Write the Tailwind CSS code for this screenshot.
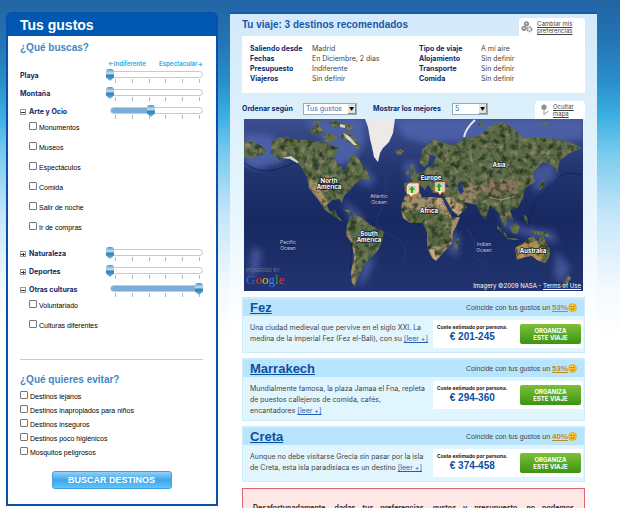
<!DOCTYPE html>
<html lang="es">
<head>
    <meta charset="UTF-8">
    <meta name="viewport" content="width=device-width, initial-scale=1.0">
    <title>Tus gustos</title>
    <script src="https://cdn.jsdelivr.net/npm/@tailwindcss/browser@4"></script>
</head>
<body class="h-screen overflow-hidden bg-white bg-[linear-gradient(#2264a4_0px,#2374b4_40px,#2a8dcb_80px,#3aaee2_115px,#7ccbee_155px,#c4e6f8_215px,#f5faff_290px,#ffffff_340px)] font-['Inter','Liberation_Sans',sans-serif] text-[7px] leading-[10px] text-[#444]">

    <div class="flex items-start gap-3 pl-1.5 pr-[23px] pt-3">

        <!-- Panel de gustos -->
        <aside class="w-[212px] shrink-0 rounded-t-md border-2 border-[#0a50a8] bg-white">
            <h1 class="h-[22px] bg-[#0058b0] pl-3 font-['Liberation_Sans'] text-[14px] leading-[22px] font-bold text-white">Tus gustos</h1>

            <form class="pl-3 pr-[13px] font-['Liberation_Sans'] text-black">
                <h2 class="mt-1 text-[10px] leading-[16px] font-bold text-[#3f87c4]">¿Qué buscas?</h2>
                <div class="mt-[3px] flex h-2 justify-between pl-[88px] font-['Inter'] text-[6px] leading-[10px] font-bold text-[#3fb0e4]">
                    <span>←Indiferente</span>
                    <span>Espectacular→</span>
                </div>

                <div id="sliders"></div>

                <hr class="mt-[23px] border-[#a5dcea]">

                <h2 class="mt-[13px] text-[10px] leading-[14px] font-bold text-[#3f87c4]">¿Qué quieres evitar?</h2>
                <div class="mt-[3px]">
                    <label class="flex h-[14px] items-baseline gap-0.5 leading-[14px]"><input type="checkbox" class="size-2 appearance-none rounded-[1px] border border-[#777] bg-white checked:bg-[#0058b0]">Destinos lejanos</label>
                    <label class="flex h-[14px] items-baseline gap-0.5 leading-[14px]"><input type="checkbox" class="size-2 appearance-none rounded-[1px] border border-[#777] bg-white checked:bg-[#0058b0]">Destinos inapropiados para niños</label>
                    <label class="flex h-[14px] items-baseline gap-0.5 leading-[14px]"><input type="checkbox" class="size-2 appearance-none rounded-[1px] border border-[#777] bg-white checked:bg-[#0058b0]">Destinos inseguros</label>
                    <label class="flex h-[14px] items-baseline gap-0.5 leading-[14px]"><input type="checkbox" class="size-2 appearance-none rounded-[1px] border border-[#777] bg-white checked:bg-[#0058b0]">Destinos poco higiénicos</label>
                    <label class="flex h-[14px] items-baseline gap-0.5 leading-[14px]"><input type="checkbox" class="size-2 appearance-none rounded-[1px] border border-[#777] bg-white checked:bg-[#0058b0]">Mosquitos peligrosos</label>
                </div>

                <button type="button" class="mx-auto mt-[11px] mb-[15px] block h-[18px] w-[120px] rounded-[3px] border border-[#3c9fe0] bg-linear-to-b from-[#8fd0f8] via-[#3ea6ea] to-[#62c4f6] text-[9px] leading-[16px] font-bold text-white">BUSCAR DESTINOS</button>
            </form>
        </aside>

        <!-- Resultados -->
        <main class="min-w-0 flex-1 border-t-2 border-[#0d5cb4] bg-[linear-gradient(#d4eafa_0px,#dcf0fb_100px,#e8f6fd_200px,#ffffff_310px)] px-3">
            <div class="flex h-[22px] items-end justify-between">
                <h2 class="mb-1 font-['Liberation_Sans'] text-[10px] leading-[14px] font-bold text-[#1b57a8]">Tu viaje: 3 destinos recomendados</h2>
                <a href="#" class="flex h-[18px] w-[66px] items-center gap-1 rounded-t-[4px] bg-white pl-0.5 text-[6px] leading-[7px] text-[#444] underline">
                    <svg class="size-3 shrink-0" viewBox="0 0 12 12" fill="none" stroke="#8e8e8e" stroke-width="1.8">
                        <circle cx="5.5" cy="2.8" r="1.7"/>
                        <circle cx="3" cy="7.3" r="1.7"/>
                        <circle cx="8.5" cy="8.2" r="2.1" stroke-dasharray="1.5 .6"/>
                    </svg>
                    <span>Cambiar mis<br>preferencias</span>
                </a>
            </div>

            <dl class="grid grid-cols-[62px_1fr_62px_96px] bg-white px-2 pt-2 pb-[9px] [&>dt]:font-bold [&>dt]:text-[#0d2a6b]">
                <dt>Saliendo desde</dt><dd>Madrid</dd><dt>Tipo de viaje</dt><dd>A mi aire</dd>
                <dt>Fechas</dt><dd>En Diciembre, 2 días</dd><dt>Alojamiento</dt><dd>Sin definir</dd>
                <dt>Presupuesto</dt><dd>Indiferente</dd><dt>Transporte</dt><dd>Sin definir</dd>
                <dt>Viajeros</dt><dd>Sin definir</dd><dt>Comida</dt><dd>Sin definir</dd>
            </dl>

            <div class="mt-1.5 flex h-5 items-center font-bold text-[#0d2a6b]">
                <label for="orden" class="w-[61px]">Ordenar según</label>
                <div class="relative w-[54px]">
                    <select id="orden" class="block h-3 w-full appearance-none border border-[#9ab] bg-white pl-0.5 text-[7px] leading-[10px] font-normal text-[#2a70b8]">
                        <option>Tus gustos</option>
                        <option>Precio</option>
                    </select>
                    <span class="pointer-events-none absolute inset-y-px right-px flex w-2 items-center justify-center border-r border-b border-[#888] bg-[#e6e3da] text-[5px] font-normal text-black">▼</span>
                </div>
                <label for="mejores" class="ml-4 w-[79px]">Mostrar los mejores</label>
                <div class="relative w-[36px]">
                    <select id="mejores" class="block h-3 w-full appearance-none border border-[#9ab] bg-white pl-0.5 text-[7px] leading-[10px] font-normal text-[#2a70b8]">
                        <option>5</option>
                        <option>10</option>
                    </select>
                    <span class="pointer-events-none absolute inset-y-px right-px flex w-2 items-center justify-center border-r border-b border-[#888] bg-[#e6e3da] text-[5px] font-normal text-black">▼</span>
                </div>
                <a href="#" class="ml-auto flex h-[18px] w-[50px] items-center gap-1 self-end rounded-t-[4px] bg-white pl-1 text-[6px] leading-[7px] font-normal text-[#444] underline">
                    <svg class="h-3 w-2.5 shrink-0" viewBox="0 0 10 12">
                        <circle cx="5" cy="3.2" r="2.6" fill="#8f8f8f"/>
                        <path d="M5 5v6M5.500 10l4-3" stroke="#999" stroke-width="1"/>
                    </svg>
                    <span>Ocultar<br>mapa</span>
                </a>
            </div>

            <!-- Mapa -->
            <div class="relative mx-0.5 h-[172px] overflow-hidden bg-[#1c2e6b]">
                <svg class="size-full" viewBox="0 0 339 172" preserveAspectRatio="xMidYMid slice">
                    <defs>
                        <linearGradient id="mar" x1="0" y1="0" x2="0" y2="1">
                            <stop offset="0" stop-color="#3c4e90"/>
                            <stop offset=".3" stop-color="#22356f"/>
                            <stop offset=".6" stop-color="#182860"/>
                            <stop offset="1" stop-color="#22346f"/>
                        </linearGradient>
                        <filter id="relieve" x="0" y="0" width="100%" height="100%" color-interpolation-filters="sRGB">
                            <feTurbulence type="fractalNoise" baseFrequency=".16" numOctaves="3" seed="4" result="n"/>
                            <feColorMatrix in="n" type="matrix" values="0 0 0 0 .16  0 0 0 0 .22  0 0 0 0 .14  3 0 0 0 -1.35" result="s"/>
                            <feComposite in="s" in2="SourceAlpha" operator="in" result="t"/>
                            <feColorMatrix in="n" type="matrix" values="0 0 0 0 .58  0 0 0 0 .52  0 0 0 0 .4  0 3 0 0 -1.5" result="c"/>
                            <feComposite in="c" in2="SourceAlpha" operator="in" result="d"/>
                            <feMerge><feMergeNode in="SourceGraphic"/><feMergeNode in="d"/><feMergeNode in="t"/></feMerge>
                        </filter>
                        <filter id="suave"><feGaussianBlur stdDeviation="3"/></filter>
                    </defs>
                    <rect width="339" height="172" fill="url(#mar)"/>

                    <!-- aguas poco profundas -->
                    <g filter="url(#suave)" fill="#4c5ea6">
                        <path d="M0 14L28 16L40 42L14 50L0 46ZM60 0H120V24L110 42L90 48L80 20ZM150 0H339V20L300 24L220 22L180 24L160 18Z"/>
                        <path d="M98 80l18 14 6 6-16 2zM120 46l12 14-6 8-12-4zM118 140l14-2-8 20-10 12zM255 94l24 14 30 4 6 12-24-4-30-10zM286 50l24-8 2 16-22 16zM158 44l14-2 2 20-10 0zM205 110l12 8-4 20-8-4zM8 128l10 4-4 22-10 6zM312 132l14 16-6 16-10-6z" opacity=".75"/>
                    </g>
                    <g fill="none" stroke="#101d4e" stroke-width="1" opacity=".7">
                        <path d="M0 44Q16 56 34 50T56 42M338 56Q318 50 312 62L292 82 286 96 284 106M108 120L106 150"/>
                        <path d="M140 54Q146 76 136 92T150 118 148 160M222 108Q234 124 230 138L248 152" stroke="#2c3d7c"/>
                    </g>

                    <g filter="url(#relieve)">
                        <g fill="#5c6d48">
                            <path d="M28 23L36 18 44 18 54 21 63 21 78 23 86 26 95 29 90 38 92 43 97 47 100 52 103 47 106 41 107 34 113 38 119 46 124 54 126 61 118 60 114 63 110 66 106 71 100 77 98 84 95 80 88 81 83 86 86 93 91 91 93 96 99 103 91 98 81 91 73 79 65 69 63 58 56 46 46 39 38 39 31 46 35 40 27 34Z"/>
                            <path d="M106 98L111 96 119 99 126 106 133 109 140 113 138 123 133 133 124 141 119 149 114 158 111 168 108 164 107 154 110 138 108 124 102 116 103 106Z"/>
                            <path d="M176 44L178 31 188 21 199 23 206 26 214 24 221 19 232 17 239 14 245 7 259 3 269 9 275 15 281 19 306 19 326 23 338 29 326 34 316 41 313 54 308 46 299 43 289 54 291 63 281 69 279 79 274 88 266 91 269 101 263 99 262 108 259 106 255 94 246 86 241 101 236 94 233 86 219 83 223 88 214 97 208 91 201 79 196 73 189 74 184 66 181 71 173 63 171 71 161 73 160 64 168 63 166 58 172 55 178 53 184 48 189 46 192 37 186 36 184 46 180 48Z"/>
                            <path d="M0 23L11 23 23 31 18 36 11 38 0 39Z"/>
                            <path d="M66 10l8-4 6 5-4 5-8-1zM79 16l9-2 6 6-8 4-7-3zM84 4l7-3 6 4-5 4zM97 14l7-1 8 7 6 9-5 1-6-6-9-4zM96 4l9 1 6 4-8 2zM68 3l8-2 2 3-8 2z"/>
                            <path d="M151 32l5-2 4 2-4 4-4-1zM166 46l3-1 2 6 2 5-6 2 1-5zM162 52l3-1 0 4-3 1zM285 111l7 1 9 1 8 6-8-2-9-1zM266 108l6-4 4 4-3 7-5-1zM253 106l9 9 1 4-10-10zM280 96l3 2 1 7-3-3zM294 68l4-4 2-6 1 6-5 7zM211 122l4-3-2 12-3-2zM263 119l12 1 0 1-12-1zM324 156l3 3-6 9-4 0zM99 90l9 2 3 3-6-1zM234 5l4-2 2 4-4 1zM296 5l6-2 3 3-6 1z"/>
                        </g>
                        <path fill="#a3926b" d="M158 84L161 77 166 74 176 74 178 78 186 78 198 79 203 89 208 98 216 98 212 108 209 113 208 124 199 134 192 142 188 139 183 128 183 113 179 104 166 104 159 99 157 91Z"/>
                        <path fill="#56693e" d="M159 94L172 91 190 93 204 96 208 103 207 114 205 123 196 128 184 126 183 113 179 104 166 104Z"/>
                        <path fill="#d0ab80" d="M201 79L208 78 214 84 223 88 214 97 208 91ZM185 128L190 127 195 136 192 141 189 139ZM193 79L198 79 201 88 193 88Z"/>
                        <path fill="#9a8966" d="M214 78L222 68 236 67 234 76 228 84 219 83Z"/>
                        <path fill="#86755a" d="M236 66L246 62 256 60 276 62 277 68 262 74 248 78 238 73Z"/>
                        <path fill="#bb914e" d="M271 129L281 123 285 119 289 118 294 123 298 116 302 124 306 131 305 138 301 144 293 141 288 137 281 138 273 141Z"/>
                        <path fill="#667344" d="M294 123L298 116 302 124 306 131 305 138 301 144 296 142 301 134ZM283 121L289 118 293 122 287 123Z"/>
                        <path fill="#a58e68" d="M66 60L72 62 78 74 84 84 81 88 73 79 65 69ZM104 112L110 124 112 138 110 152 112 166 108 164 107 154 110 138 108 124 102 116Z"/>
                    </g>
                    <g fill="#ece9e6">
                        <path d="M121 0H151L149 14 145 23 139 29 136 34 134 43 130 38 128 28 126 20 124 8Z"/>
                        <path d="M38 39L47 37 55 43 53 44 46 40zM99 14l6 3 8 9-3 0-7-6zM96 5l5 1 0 3-5-1z" opacity=".85"/>
                    </g>
                    <path d="M220 18Q222 9 231 1" fill="none" stroke="#e6e6ea" stroke-width="2"/>
                    <path d="M214 64l4-2 0 5 2 6-4 2-2-5zM194 64l8 0 3 4-9 1z" fill="#26397a"/>
                    <path d="M200 80l8 14" stroke="#26397a" stroke-width="1.500"/>
                    <path d="M245 78l12 3 14-4" fill="none" stroke="#d8cfc0" stroke-width=".5"/>

                    <g font-family="Inter, sans-serif" text-anchor="middle" font-size="6" paint-order="stroke" stroke="#1a1f2c" stroke-width="1.400">
                        <g fill="#fff" font-weight="700">
                            <text x="85" y="64">North</text><text x="85" y="70">America</text>
                            <text x="125" y="117">South</text><text x="125" y="123">America</text>
                            <text x="255" y="48">Asia</text>
                            <text x="187" y="61">Europe</text>
                            <text x="185" y="94">Africa</text>
                            <text x="289" y="134">Australia</text>
                        </g>
                        <g fill="#c4cbe8" stroke="#18265a" font-size="5">
                            <text x="135" y="79">Atlantic</text><text x="135" y="85">Ocean</text>
                            <text x="44" y="125">Pacific</text><text x="44" y="131">Ocean</text>
                            <text x="240" y="127">Indian</text><text x="240" y="133">Ocean</text>
                        </g>
                    </g>

                    <!-- marcadores -->
                    <g>
                        <path d="M165 64h10v10h-4l-2 4-2-4h-4v-8z" fill="#fff" stroke="#d8662c" stroke-width="1"/>
                        <path d="M163 66h10v9h-4l-2 3-2-3h-2z" fill="#fff" stroke="#e08a4a" stroke-width=".6"/>
                        <path d="M164 67h8v7h-8z" fill="#c6e6a2"/>
                        <path d="M164 67h8v2h-8z" fill="#a8d4ee"/>
                        <path d="M168 67l3 4h-2v3h-2v-3h-2z" fill="#3d9a2c"/>
                    </g>
                    <g>
                        <path d="M191 63h10v10h-3l-2 3-2-3h-3z" fill="#fff" stroke="#d8662c" stroke-width="1"/>
                        <path d="M192 64h8v8h-8z" fill="#c6e6a2"/>
                        <path d="M192 64h8v2h-8z" fill="#a8d4ee"/>
                        <path d="M195 64l3 4h-2v4h-2v-4h-2z" fill="#3d9a2c"/>
                    </g>
                </svg>
                <div class="absolute bottom-1 left-0.5 font-['Liberation_Serif']">
                    <div class="h-[5px] font-['Liberation_Sans'] text-[5px] leading-[5px] text-[#66748c]">POWERED BY</div>
                    <div class="text-[13px] leading-[14px]"><span class="text-[#2f62d8]">G</span><span class="text-[#e03030]">o</span><span class="text-[#e8b820]">o</span><span class="text-[#3f78e8]">g</span><span class="text-[#28a040]">l</span><span class="text-[#e03030]">e</span></div>
                </div>
                <p class="absolute right-0.5 bottom-0 text-[6px] text-white">Imagery ©2009 NASA - <a href="#" class="underline">Terms of Use</a></p>
            </div>

            <!-- Destinos -->
            <div id="destinos" class="mt-1.5 flex flex-col gap-[5px]"></div>

            <div class="mt-1.5 border border-[#dc6472] bg-[#fee8e5] px-[10px] pt-[14px] pb-4 font-bold text-[#4a3030]">
                <p class="text-justify [text-align-last:justify]">Desafortunadamente, dadas tus preferencias, gustos y presupuesto, no podemos</p>
            </div>
        </main>
    </div>

    <script>
        const gustos = [
            { nombre: "Playa", valor: 0 },
            { nombre: "Montaña", valor: 0 },
            { nombre: "Arte y Ocio", valor: 46, signo: "−", hijos: ["Monumentos", "Museos", "Espectáculos", "Comida", "Salir de noche", "Ir de compras"] },
            { nombre: "Naturaleza", valor: 0, signo: "+" },
            { nombre: "Deportes", valor: 0, signo: "+" },
            { nombre: "Otras culturas", valor: 100, signo: "−", hijos: ["Voluntariado", "Culturas diferentes"] },
        ];

        const destinos = [
            { nombre: "Fez", pct: 53, precio: "201-245", texto: "Una ciudad medieval que pervive en el siglo XXI. La<br>medina de la imperial Fez (Fez el-Bali), con su" },
            { nombre: "Marrakech", pct: 53, precio: "294-360", texto: "Mundialmente famosa, la plaza Jamaa el Fna, repleta<br>de puestos callejeros de comida, cafés,<br>encantadores" },
            { nombre: "Creta", pct: 40, precio: "374-458", texto: "Aunque no debe visitarse Grecia sin pasar por la isla<br>de Creta, esta isla paradisiaca es un destino" },
        ];

        const marca = '<i class="h-1 w-px bg-[#9fc0d4]"></i>';

        document.getElementById("sliders").innerHTML = gustos.map((g, i) => `
            <div class="flex h-[18px] items-start justify-between">
                <div class="flex items-center gap-[3px] pt-1">
                    ${g.signo ? `<button type="button" aria-label="Desplegar ${g.nombre}" class="relative size-[6px] border border-[#999] bg-white">
                        <i class="absolute top-[2px] left-0 h-px w-1 bg-[#333]"></i>
                        ${g.signo === "+" ? '<i class="absolute top-[1px] left-[2px] h-[3px] w-px bg-[#333]"></i>' : ""}
                    </button>` : ""}
                    <label for="gusto${i}" class="font-['Inter'] text-[7px] leading-[10px] font-bold text-[#0d2a6b]">${g.nombre}</label>
                </div>
                <div class="relative w-[97px] pt-1">
                    <div class="ml-1 h-[7px] overflow-hidden rounded-full border border-[#b4d0e6] bg-white">
                        <div class="h-full bg-[#7aaed8]" style="width: ${g.valor}%"></div>
                    </div>
                    <div class="mt-px ml-[9px] mr-[3px] flex justify-between">${marca.repeat(6)}</div>
                    <input id="gusto${i}" type="range" value="${g.valor}" class="absolute top-0.5 left-0 h-3 w-full appearance-none bg-transparent [&::-webkit-slider-thumb]:h-3 [&::-webkit-slider-thumb]:w-2 [&::-webkit-slider-thumb]:appearance-none [&::-webkit-slider-thumb]:rounded-t-[3px] [&::-webkit-slider-thumb]:bg-[linear-gradient(#4a92c4_0,#c4e2f2_35%,#2f7fb8_55%,#6cb8e0_100%)] [&::-webkit-slider-thumb]:[clip-path:polygon(0_0,100%_0,100%_70%,50%_100%,0_70%)]">
                </div>
            </div>
            ${g.hijos ? `<div class="-mt-[3px] mb-[7px] pl-[9px]">${g.hijos.map(h => `
                <label class="flex h-5 items-baseline gap-0.5 leading-5"><input type="checkbox" class="size-2 appearance-none rounded-[1px] border border-[#777] bg-white checked:bg-[#0058b0]">${h}</label>`).join("")}
            </div>` : ""}`).join("");

        document.getElementById("destinos").innerHTML = destinos.map(d => `
            <article class="border border-[#cdebf8] border-t-2 bg-[#e0f5fe]">
                <header class="flex h-[17px] items-center justify-between bg-[#b9e4fe] pl-[7px] pr-[7px]">
                    <h3 class="font-['Liberation_Sans'] text-[13px] leading-[15px] font-bold"><a href="#" class="text-[#0c50a0] underline">${d.nombre}</a></h3>
                    <p class="flex items-center font-['Liberation_Sans'] text-[7px]">Coincide con tus gustos un&nbsp;<b class="text-[8px] text-[#c08a1c] underline">${d.pct}%</b>
                        <svg class="size-[9px]" viewBox="0 0 9 9">
                            <circle cx="4.500" cy="4.500" r="4" fill="#fbc62c" stroke="#d89a18" stroke-width=".6"/>
                            <circle cx="3.200" cy="3.500" r=".6" fill="#5a3c08"/><circle cx="5.800" cy="3.500" r=".6" fill="#5a3c08"/>
                            <path d="M2.500 5.500Q4.500 7.500 6.500 5.500" fill="none" stroke="#7a4c08" stroke-width=".7"/>
                        </svg>
                    </p>
                </header>
                <div class="flex items-start justify-between pr-px pb-0.5 pl-[7px]">
                    <p class="min-h-[34px] pt-1.5 pb-0.5 leading-[11px] whitespace-nowrap">${d.texto} <a href="#" class="text-[#1b62b4] underline">[leer +]</a></p>
                    <div class="mt-1 flex w-[150px] shrink-0 items-center justify-between bg-white py-1 pr-0.5 pl-1">
                        <div class="text-center whitespace-nowrap">
                            <p class="text-[5px] leading-[6px] font-bold text-[#222]">Coste estimado por persona.</p>
                            <p class="font-['Liberation_Sans'] text-[10px] leading-[14px] font-bold text-[#0c50a0]">€ ${d.precio}</p>
                        </div>
                        <button type="button" class="h-5 w-[61px] rounded-[2px] bg-linear-to-b from-[#7cc038] to-[#3a9410] text-[6px] leading-[7px] font-bold text-white">ORGANIZA<br>ESTE VIAJE</button>
                    </div>
                </div>
            </article>`).join("");
    </script>

</body>
</html>
